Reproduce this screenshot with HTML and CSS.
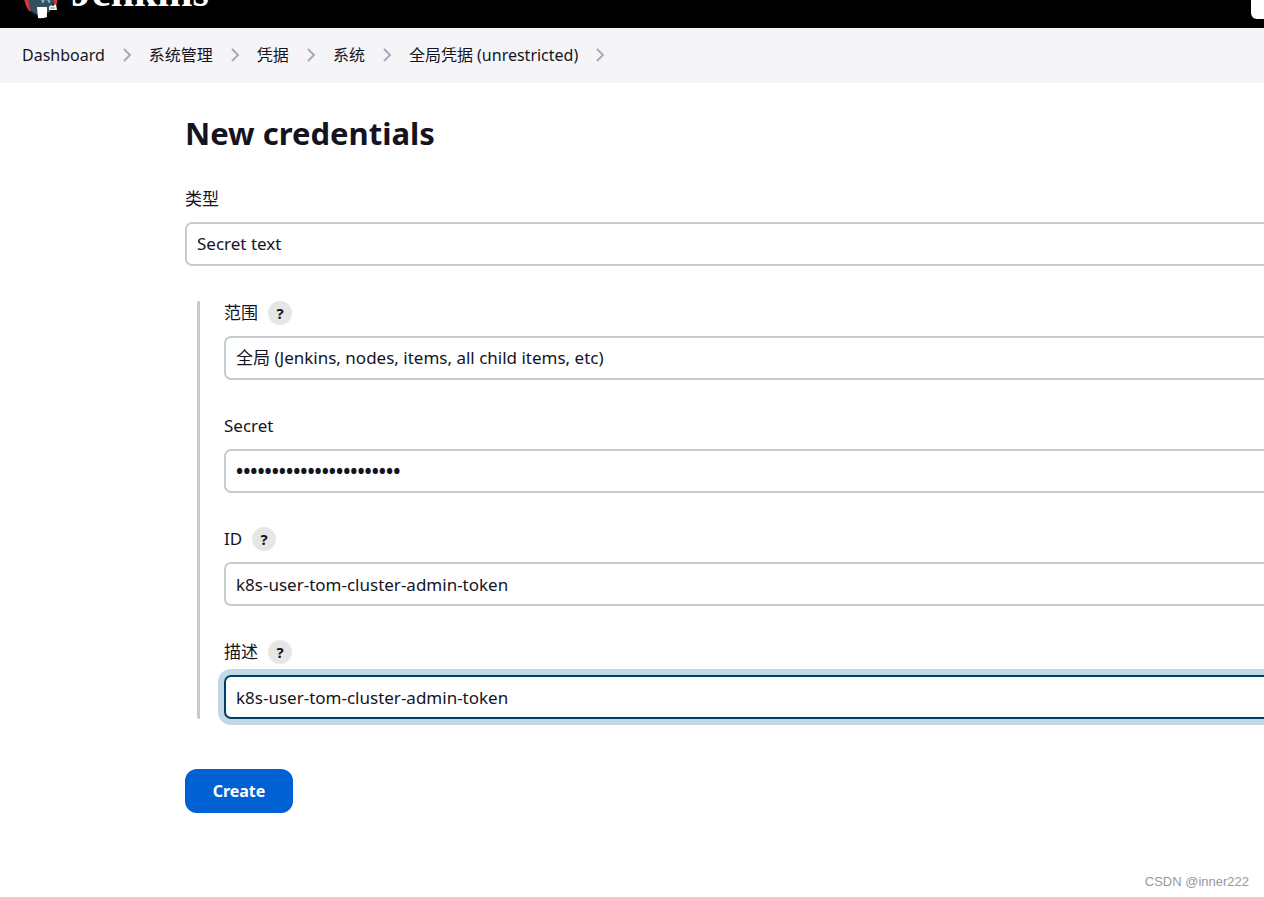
FILE: index.html
```html
<!DOCTYPE html>
<html lang="zh-CN">
<head>
<meta charset="utf-8">
<meta name="viewport" content="width=device-width, initial-scale=1">
<title>New credentials - Jenkins</title>
<link rel="stylesheet" href="styles.css">
</head>
<body>
<header class="header">
  <a class="brand" href="#">
    <svg class="brand-logo" viewBox="0 0 36 48" aria-hidden="true">
      <ellipse cx="18" cy="16" rx="13" ry="15" fill="#f0d6b7"/>
      <path d="M1 26 L5 38 L11 44 L17 37 L29 37 L34 38 L35 24Z" fill="#111"/>
      <path d="M1 27 Q2 33 6 39 L10 39 L8 27Z" fill="#d33833"/>
      <path d="M30 27 L31 34 L34 31 L34 26Z" fill="#d33833"/>
      <path d="M5 26 L7 38 L14 43 L27 40 L31 27Z" fill="#335061"/>
      <path d="M18 27 L19 31 L23 30 L27 31 L27 27Z" fill="#81b0c4"/>
      <circle cx="23" cy="30" r="2" fill="#335061"/>
      <path d="M14 35 L24 35 L24 45 Q19 47 15 46Z" fill="#fff"/>
      <path d="M26 35 Q28 32 30 34 L33 32 L34 38 L26 38Z" fill="#f4f4f4"/>
      <path d="M27 36h5" stroke="#888" fill="none"/>
    </svg>
    <span class="brand-name">Jenkins</span>
  </a>
  <input class="search" type="search" aria-label="Search">
</header>
<nav aria-label="Breadcrumb">
  <ol class="breadcrumbs">
    <li><a href="#">Dashboard</a><svg class="chevron" viewBox="0 0 9 14" aria-hidden="true"><path d="M1 1l6 6-6 6"/></svg></li>
    <li><a href="#">系统管理</a><svg class="chevron" viewBox="0 0 9 14" aria-hidden="true"><path d="M1 1l6 6-6 6"/></svg></li>
    <li><a href="#">凭据</a><svg class="chevron" viewBox="0 0 9 14" aria-hidden="true"><path d="M1 1l6 6-6 6"/></svg></li>
    <li><a href="#">系统</a><svg class="chevron" viewBox="0 0 9 14" aria-hidden="true"><path d="M1 1l6 6-6 6"/></svg></li>
    <li><a href="#">全局凭据 (unrestricted)</a><svg class="chevron" viewBox="0 0 9 14" aria-hidden="true"><path d="M1 1l6 6-6 6"/></svg></li>
  </ol>
</nav>
<main class="main">
  <h1 class="title">New credentials</h1>
  <form class="form">
    <div class="field">
      <div class="field-label"><label for="kind">类型</label></div>
      <select class="control" id="kind"><option>Secret text</option></select>
    </div>
    <div class="nested">
      <div class="field">
        <div class="field-label"><label for="scope">范围</label><button class="help" type="button" aria-label="Help: 范围">?</button></div>
        <select class="control" id="scope"><option>全局 (Jenkins, nodes, items, all child items, etc)</option></select>
      </div>
      <div class="field">
        <div class="field-label"><label for="secret">Secret</label></div>
        <input class="control control-secret" id="secret" type="password" value="12345678901234567890123">
      </div>
      <div class="field">
        <div class="field-label"><label for="cred-id">ID</label><button class="help" type="button" aria-label="Help: ID">?</button></div>
        <input class="control" id="cred-id" type="text" value="k8s-user-tom-cluster-admin-token">
      </div>
      <div class="field">
        <div class="field-label"><label for="desc">描述</label><button class="help" type="button" aria-label="Help: 描述">?</button></div>
        <input class="control control-active" id="desc" type="text" value="k8s-user-tom-cluster-admin-token">
      </div>
    </div>
    <button class="create" type="button">Create</button>
  </form>
</main>
<footer class="watermark">CSDN @inner222</footer>
</body>
</html>
```
FILE: styles.css
```css
* {
  box-sizing: border-box;
}

body {
  margin: 0;
  min-height: 100vh;
  display: flex;
  flex-direction: column;
  overflow-x: hidden;
  background: #fff;
  color: #14141f;
  font: 17px/24px "Noto Sans", "Noto Sans CJK SC", sans-serif;
}

.header {
  display: flex;
  align-items: flex-end;
  justify-content: space-between;
  height: 28px;
  padding-left: 23px;
  overflow: hidden;
  background: #000;
}

.brand {
  display: flex;
  align-items: flex-end;
  gap: 12px;
  color: #fff;
  text-decoration: none;
}

.brand-logo {
  width: 36px;
  height: 48px;
  margin-bottom: 8px;
}

.brand-name {
  margin-bottom: 14px;
  font: bold 42px/44px "Liberation Serif", serif;
}

.search {
  width: 256px;
  height: 38px;
  margin: 0 -243px 9px 0;
  flex: none;
  border: 0;
  border-radius: 6px;
  background: #fff;
}

.breadcrumbs {
  display: flex;
  align-items: center;
  height: 55px;
  margin: 0;
  padding: 0 22px 2px;
  list-style: none;
  background: #f5f5f8;
  font-size: 16px;
}

.breadcrumbs li {
  display: flex;
  align-items: center;
}

.breadcrumbs a {
  color: inherit;
  text-decoration: none;
}

.chevron {
  width: 9px;
  height: 14px;
  margin: 0 17px 0 18px;
  fill: none;
  stroke: #a9a9bd;
  stroke-width: 2;
}

.main {
  flex: 1;
  padding: 28px 0 0 185px;
}

.title {
  margin: 0 0 32px;
  font-size: 31px;
  line-height: 44px;
}

.form {
  margin-right: -48px;
}

.field {
  display: flex;
  flex-direction: column;
  gap: 11px;
}

.field-label {
  display: flex;
  align-items: center;
  gap: 10px;
}

.help {
  width: 24px;
  height: 24px;
  padding: 0;
  border: 0;
  border-radius: 50%;
  background: #e6e6e6;
  color: inherit;
  font: bold 15px/24px "Noto Sans", sans-serif;
}

.control {
  width: 100%;
  height: 44px;
  padding: 0 10px;
  appearance: none;
  border: 2px solid #c3ccd1;
  border-radius: 7px;
  outline: 0;
  background: #fff;
  color: inherit;
  font: 17px/24px "Noto Sans", "Noto Sans CJK SC", sans-serif;
}

.control-secret {
  font: bold 19px/24px "Open Sans", sans-serif;
}

.control-active {
  border-color: #003f61;
  box-shadow: 0 0 0 6px #c1d9e7;
}

.nested {
  display: flex;
  flex-direction: column;
  gap: 34px;
  margin: 35px 0 50px 12px;
  padding-left: 24px;
  border-left: 3px solid #c3ccd1;
  border-radius: 2px;
}

.create {
  width: 108px;
  height: 44px;
  border: 0;
  border-radius: 12px;
  background: #0061d5;
  color: #fff;
  font: bold 16px/24px "Noto Sans", sans-serif;
}

.watermark {
  padding: 0 15px 4px;
  color: #999;
  font: 13px/22px "Liberation Sans", sans-serif;
  text-align: right;
}
```
